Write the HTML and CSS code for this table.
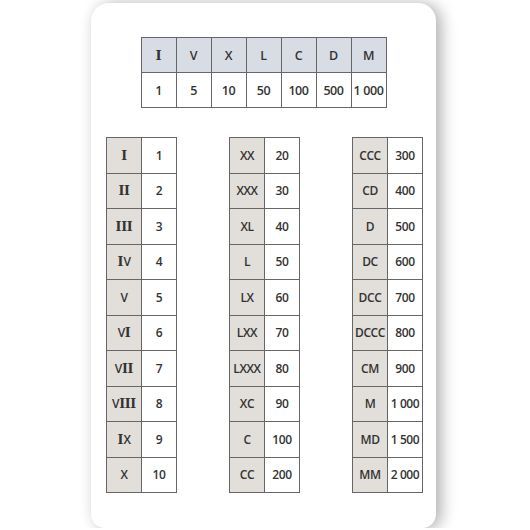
FILE: index.html
```html
<!DOCTYPE html>
<html lang="en">
<head>
<meta charset="utf-8">
<title>Roman numerals</title>
<link rel="stylesheet" href="styles.css">
</head>
<body>
<div class="card">
  <table class="key">
    <tr class="head"><td><span class="i">I</span></td><td>V</td><td>X</td><td>L</td><td>C</td><td>D</td><td>M</td></tr>
    <tr><td>1</td><td>5</td><td>10</td><td>50</td><td>100</td><td>500</td><td>1 000</td></tr>
  </table>
  <div class="columns">
    <table class="list">
      <tr><td class="r"><span class="i">I</span></td><td>1</td></tr>
      <tr><td class="r"><span class="i">II</span></td><td>2</td></tr>
      <tr><td class="r"><span class="i">III</span></td><td>3</td></tr>
      <tr><td class="r"><span class="i lead">I</span>V</td><td>4</td></tr>
      <tr><td class="r">V</td><td>5</td></tr>
      <tr><td class="r">V<span class="i">I</span></td><td>6</td></tr>
      <tr><td class="r">V<span class="i">II</span></td><td>7</td></tr>
      <tr><td class="r">V<span class="i">III</span></td><td>8</td></tr>
      <tr><td class="r"><span class="i lead">I</span>X</td><td>9</td></tr>
      <tr><td class="r">X</td><td>10</td></tr>
    </table>
    <table class="list">
      <tr><td class="r">XX</td><td>20</td></tr>
      <tr><td class="r">XXX</td><td>30</td></tr>
      <tr><td class="r">XL</td><td>40</td></tr>
      <tr><td class="r">L</td><td>50</td></tr>
      <tr><td class="r">LX</td><td>60</td></tr>
      <tr><td class="r">LXX</td><td>70</td></tr>
      <tr><td class="r">LXXX</td><td>80</td></tr>
      <tr><td class="r">XC</td><td>90</td></tr>
      <tr><td class="r">C</td><td>100</td></tr>
      <tr><td class="r">CC</td><td>200</td></tr>
    </table>
    <table class="list">
      <tr><td class="r">CCC</td><td>300</td></tr>
      <tr><td class="r">CD</td><td>400</td></tr>
      <tr><td class="r">D</td><td>500</td></tr>
      <tr><td class="r">DC</td><td>600</td></tr>
      <tr><td class="r">DCC</td><td>700</td></tr>
      <tr><td class="r">DCCC</td><td>800</td></tr>
      <tr><td class="r">CM</td><td>900</td></tr>
      <tr><td class="r">M</td><td>1 000</td></tr>
      <tr><td class="r">MD</td><td>1 500</td></tr>
      <tr><td class="r">MM</td><td>2 000</td></tr>
    </table>
  </div>
</div>
</body>
</html>
```
FILE: styles.css
```css
html, body {
  margin: 0;
  padding: 0;
  background: #ffffff;
}
body {
  font-family: "Open Sans", "DejaVu Sans", sans-serif;
  font-weight: 600;
  color: #333333;
  overflow: hidden;
}
.card {
  box-sizing: border-box;
  width: 345px;
  height: 525px;
  margin: 3px 0 0 91px;
  background: #ffffff;
  border-radius: 18px 18px 14px 14px;
  box-shadow: 5px 1px 16px rgba(0, 0, 0, 0.32);
  padding-top: 34px;
  display: flex;
  flex-direction: column;
  align-items: center;
}
table {
  border-collapse: collapse;
}
td {
  border: 1px solid #666666;
  padding: 0;
  text-align: center;
  vertical-align: middle;
  width: 34px;
  white-space: nowrap;
  letter-spacing: -0.4px;
}
.i {
  font-family: "DejaVu Serif", serif;
  font-weight: 700;
  font-size: 1.05em;
  letter-spacing: -0.3px;
}
.i.lead {
  margin-right: 0.5px;
}
.key td {
  height: 34px;
  font-size: 12.5px;
}
.key .head td {
  background: #d8dde5;
}
.columns {
  align-self: stretch;
  display: flex;
  justify-content: space-between;
  padding: 0 13px 0 15px;
  margin-top: 29px;
}
.list td {
  height: 34.5px;
  font-size: 12px;
}
.list td.r {
  background: #e2ded9;
}
```
